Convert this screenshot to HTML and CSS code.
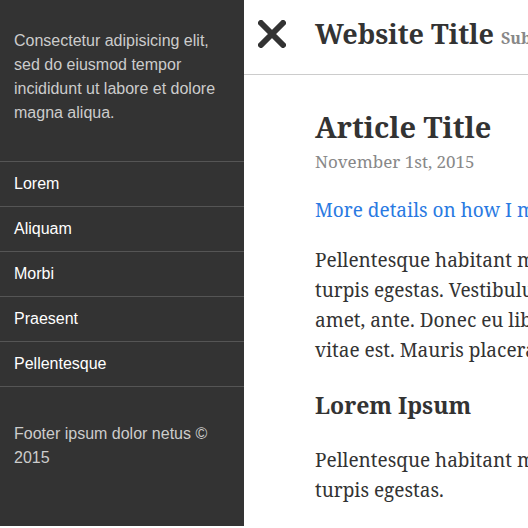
FILE: index.html
```html
<!DOCTYPE html>
<html lang="en">
<head>
<meta charset="utf-8">
<title>Website Title</title>
<link rel="stylesheet" href="styles.css">
</head>
<body>
<div class="layout">
  <aside class="sidebar">
    <p class="sidebar-text">Consectetur adipisicing elit, sed do eiusmod tempor incididunt ut labore et dolore magna aliqua.</p>
    <nav class="sidebar-nav">
      <a href="#">Lorem</a>
      <a href="#">Aliquam</a>
      <a href="#">Morbi</a>
      <a href="#">Praesent</a>
      <a href="#">Pellentesque</a>
    </nav>
    <p class="sidebar-text">Footer ipsum dolor netus © 2015</p>
  </aside>
  <div class="page">
    <header class="masthead">
      <button class="toggle" type="button" aria-label="Close menu">
        <svg viewBox="0 0 28 28" width="28" height="28" aria-hidden="true"><path d="M3 3L25 25M25 3L3 25"/></svg>
      </button>
      <h2 class="site-title">Website Title <small>Subtitle</small></h2>
    </header>
    <main class="content">
      <h1 class="post-title">Article Title</h1>
      <time class="post-date">November 1st, 2015</time>
      <p><a href="#">More details on how I made</a></p>
      <p>Pellentesque habitant morbi<br>turpis egestas. Vestibulum<br>amet, ante. Donec eu libero<br>vitae est. Mauris placerat</p>
      <h3 class="section-title">Lorem Ipsum</h3>
      <p>Pellentesque habitant morbi<br>turpis egestas.</p>
    </main>
  </div>
</div>
</body>
</html>
```
FILE: styles.css
```css
* { box-sizing: border-box; }
body {
  margin: 0;
  background: #fff;
  color: #333;
  font: 19px/30px "Droid Serif", "Noto Serif", "Liberation Serif", serif;
}
.layout { display: flex; }
.sidebar {
  flex: 0 0 244px;
  min-height: calc(100vh - 2px);
  background: #333;
  color: #ccc;
  font: 16px/24px "Liberation Sans", sans-serif;
}
.sidebar-text { margin: 0; padding: 29px 14px 36px; }
.sidebar-nav { border-bottom: 1px solid #555; }
.sidebar-nav a {
  display: block;
  padding: 10px 14px;
  border-top: 1px solid #555;
  color: #fff;
  text-decoration: none;
}
.sidebar-nav + .sidebar-text { padding-top: 35px; }
.page { flex: 1; min-width: 0; overflow: hidden; white-space: nowrap; }
.masthead {
  display: flex;
  align-items: center;
  gap: 29px;
  padding: 18px 0 24px 14px;
  border-bottom: 1px solid #ccc;
}
.toggle {
  display: flex;
  flex: none;
  padding: 0;
  border: 0;
  background: none;
  cursor: pointer;
}
.toggle path { fill: none; stroke: #333; stroke-width: 6; stroke-linecap: round; }
.site-title { margin: 0; font-size: 27px; line-height: 32px; }
.site-title small { color: #888; font-size: 16px; line-height: 16px; }
.content { padding: 36px 0 0 71px; }
.post-title { margin: 0; font-size: 29px; line-height: 32px; }
.post-date { display: block; margin: 3px 0 17px; color: #888; font-size: 17px; line-height: 32px; }
.content p { margin: 0 0 20px; }
.content a { color: #2a7ae2; text-decoration: none; }
.content .section-title { margin: 25px 0; font-size: 23px; line-height: 30px; }
```
